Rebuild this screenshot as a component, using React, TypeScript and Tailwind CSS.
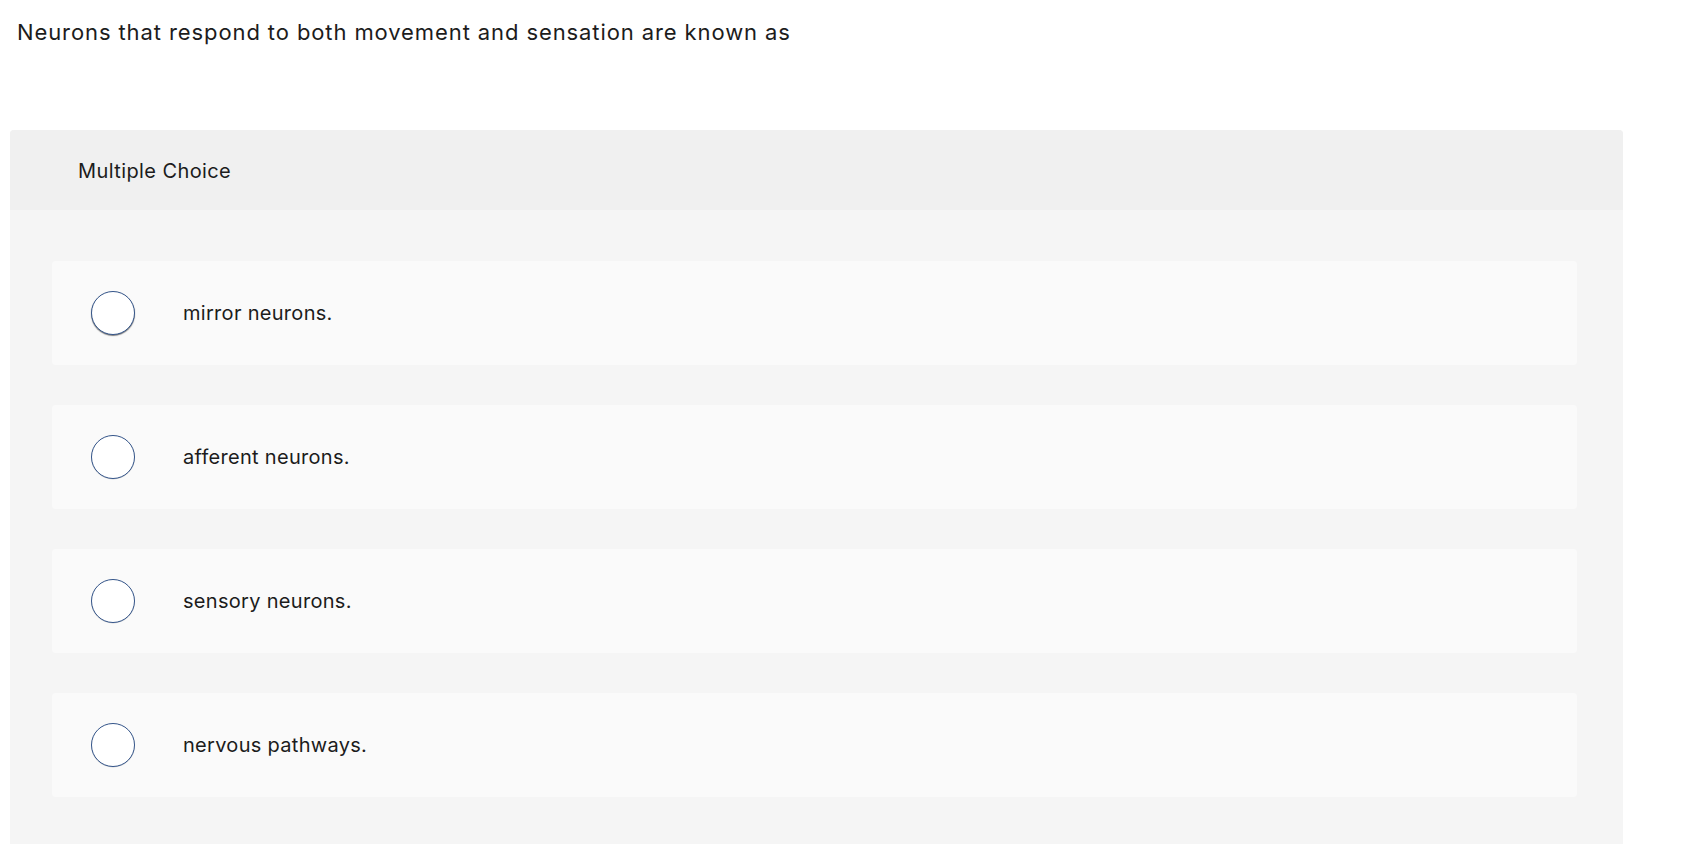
import React from "react";

const options = [
  "mirror neurons.",
  "afferent neurons.",
  "sensory neurons.",
  "nervous pathways.",
];

export default function App() {
  return (
    <div
      className="min-h-screen bg-white text-[#1c1c1c]"
      style={{ fontFamily: "Inter, 'Open Sans', sans-serif" }}
    >
      <div className="h-[130px] pl-[17px] pt-[16px]">
        <p className="text-[22px] leading-[32px] tracking-[0.9px]">
          Neurons that respond to both movement and sensation are known as
        </p>
      </div>
      <div className="ml-[10px] w-[1613px] rounded-t-[4px] bg-[#f5f5f5] pb-[47px]">
        <div className="flex h-[80px] items-center rounded-t-[4px] bg-[#f0f0f0] pl-[68px] pt-[2px]">
          <span className="text-[20px] leading-[28px] tracking-[0.4px]">Multiple Choice</span>
        </div>
        <div className="flex flex-col gap-[40px] pl-[42px] pr-[46px] pt-[51px]">
          {options.map((o, i) => (
            <div
              key={o}
              className="flex h-[104px] items-center rounded-[4px] bg-[#fafafa] pl-[39px]"
            >
              <span
                className={
                  "block h-[44px] w-[44px] shrink-0 rounded-full border-[1.5px] border-[#34558a] bg-white " +
                  (i === 0 ? "shadow-[0_1px_1px_rgba(0,0,0,0.5)]" : "shadow-[0_0.5px_0.5px_rgba(0,0,0,0.15)]")
                }
              />
              <span className="ml-[48px] text-[20px] leading-[28px] tracking-[0.3px]">{o}</span>
            </div>
          ))}
        </div>
      </div>
    </div>
  );
}
